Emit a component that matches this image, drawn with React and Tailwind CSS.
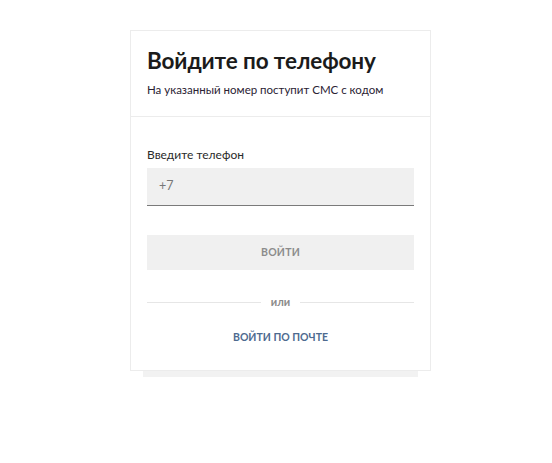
export default function App() {
  return (
    <div className="min-h-[463px] bg-white" style={{ fontFamily: "Lato, 'Noto Sans', sans-serif" }}>
      <div className="pt-[30px] pl-[130px]">
        <div className="w-[301px] border border-[#ececec] bg-white">
          <div className="px-4 pt-[15px] pb-[18px] border-b border-[#ececec]">
            <h1 className="text-[22.5px] leading-[30px] font-bold text-[#1b1b1b] tracking-[-0.1px]">Войдите по телефону</h1>
            <p className="mt-[6px] text-[11.5px] leading-[16px] text-[#2a2233]">На указанный номер поступит СМС с кодом</p>
          </div>
          <div className="px-4 pt-[30px] pb-[24px]">
            <label className="block text-[12px] leading-[16px] text-[#2a2a2a]">Введите телефон</label>
            <div className="mt-[5px] h-[38px] bg-[#f0f0f0] border-b border-[#7a7a7a] flex items-center px-3 text-[12.5px] text-[#777]">+7</div>
            <button className="mt-[29px] w-full h-[35px] bg-[#f0f0f0] text-[10.5px] font-bold text-[#8c8c8c] tracking-[0.2px]">ВОЙТИ</button>
            <div className="mt-[26px] flex items-center gap-[10px]">
              <div className="flex-1 h-px bg-[#e6e6e6]"></div>
              <span className="text-[11px] leading-[12px] font-bold text-[#8a8a8a]">или</span>
              <div className="flex-1 h-px bg-[#e6e6e6]"></div>
            </div>
            <div className="mt-[22px] text-center text-[10.5px] font-bold text-[#4e6a8f]">ВОЙТИ ПО ПОЧТЕ</div>
          </div>
        </div>
        <div className="ml-[13px] w-[275px] h-[6px] bg-[#f2f2f2]"></div>
      </div>
    </div>
  );
}
